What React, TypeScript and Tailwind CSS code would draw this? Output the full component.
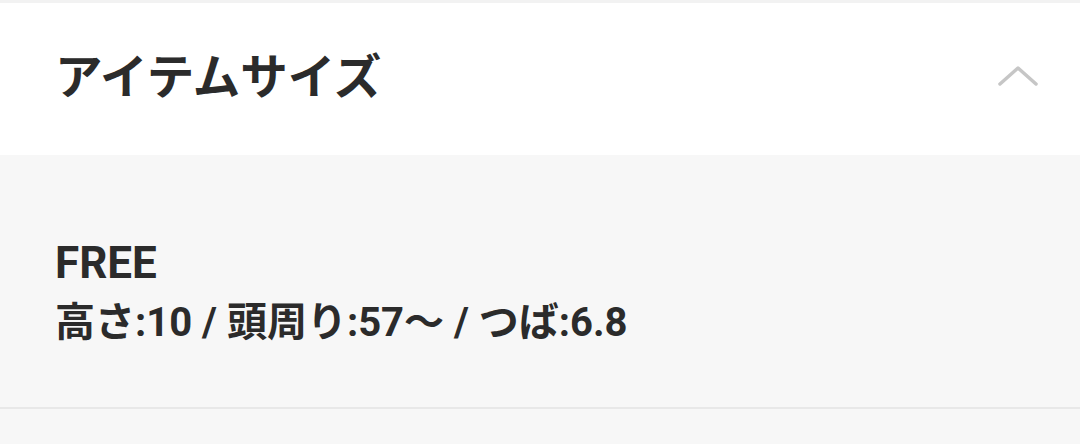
export default function App() {
  return (
    <div
      className="w-[1080px] h-[444px] overflow-hidden bg-[#f7f7f7] text-[#2b2b2b]"
      style={{ fontFamily: 'Roboto, "Noto Sans CJK JP", sans-serif' }}
    >
      <div className="h-[3px] bg-[#f2f2f2]" />
      <div className="h-[152px] bg-white flex items-center justify-between pl-[55px] pr-[42px]">
        <h2 className="text-[47.5px] font-bold leading-none">アイテムサイズ</h2>
        <svg width="40" height="22" viewBox="0 0 40 22" fill="none" className="mt-[-6px]">
          <path d="M2 19 L20 3 L38 19" stroke="#c6c6c6" strokeWidth="3.5" strokeLinecap="round" strokeLinejoin="round" />
        </svg>
      </div>
      <div className="h-[252px] pl-[55px] pt-[78px]">
        <p className="text-[44px] font-bold leading-[60px]">FREE</p>
        <p className="text-[40px] font-bold leading-[60px]">高さ:10 / 頭周り:57〜 / つば:6.8</p>
      </div>
      <div className="h-[2px] bg-[#e8e8e8]" />
    </div>
  );
}
